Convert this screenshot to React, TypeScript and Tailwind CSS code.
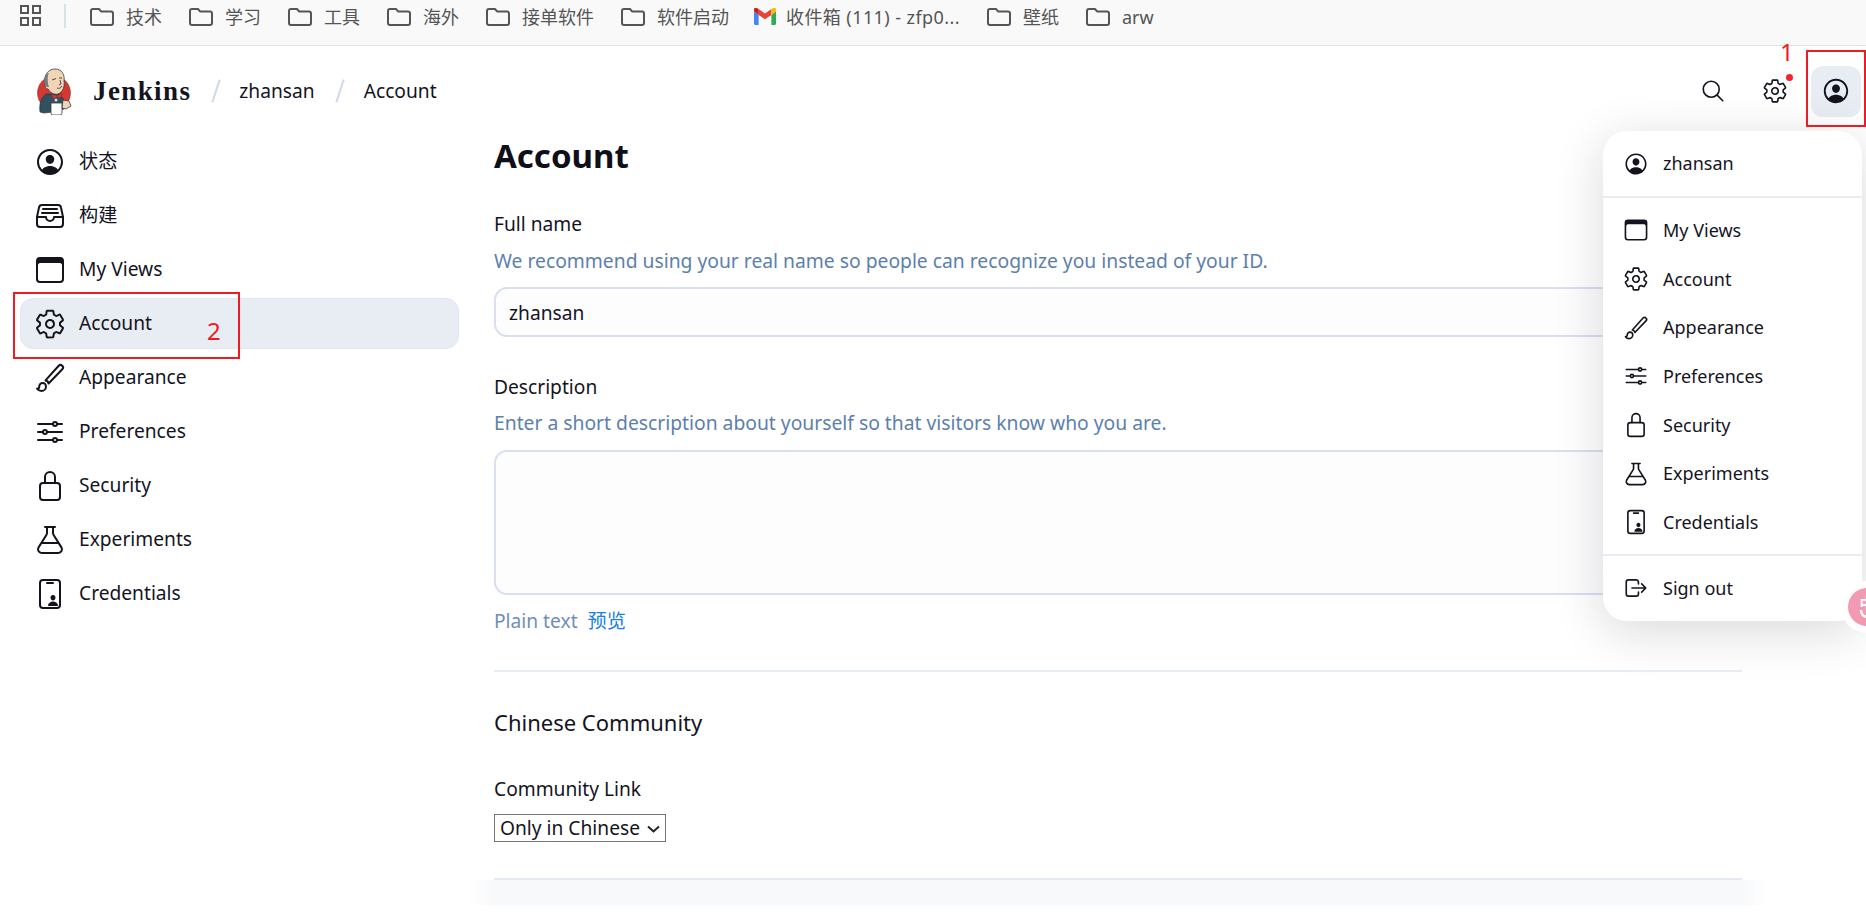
import React from "react";
import {
  IoPersonCircleOutline, IoFileTrayFullOutline, IoBrowsersOutline, IoSettingsOutline,
  IoBrushOutline, IoOptionsOutline, IoLockClosedOutline, IoFlaskOutline, IoIdCardOutline,
  IoSearchOutline, IoLogOutOutline,
} from "react-icons/io5";

const FONT = "font-['Noto_Sans','Noto_Sans_CJK_SC',sans-serif]";

function Folder() {
  return (
    <svg width="24" height="18" viewBox="0 0 24 18" fill="none" stroke="#555" strokeWidth="2" className="shrink-0">
      <path d="M1 3a2 2 0 0 1 2-2h6l2.300 2.600H21a2 2 0 0 1 2 2V15a2 2 0 0 1-2 2H3a2 2 0 0 1-2-2z" strokeLinejoin="round" />
    </svg>
  );
}

function Gmail() {
  return (
    <svg width="22" height="17" viewBox="0 0 19 16" preserveAspectRatio="none" className="shrink-0 -ml-[2px] -mr-[2px]">
      <path d="M0 3v11.500A1.500 1.500 0 0 0 1.500 16H4V6.500z" fill="#4285f4" />
      <path d="M15 6.500V16h2.500a1.500 1.500 0 0 0 1.500-1.500V3z" fill="#34a853" />
      <path d="M4 6.500 9.500 10.500 15 6.500V1L9.500 5.200 4 1z" fill="#ea4335" />
      <path d="M0 3 4 6.500V1L2.500 0A1.600 1.600 0 0 0 0 1.500z" fill="#c5221f" />
      <path d="M15 1v5.500L19 3V1.500A1.600 1.600 0 0 0 16.500 0z" fill="#fbbc04" />
    </svg>
  );
}

function Bookmark({ label, gmail }: { label: string; gmail?: boolean }) {
  return (
    <div className="flex items-center gap-[12px]">
      {gmail ? <Gmail /> : <Folder />}
      <span className={`text-[18px] leading-[24px] text-[#555] whitespace-nowrap ${gmail ? "tracking-[0.42px]" : ""}`}>{label}</span>
    </div>
  );
}

function JenkinsLogo() {
  return (
    <svg width="35" height="47" viewBox="0 0 35 47" className="shrink-0">
      <ellipse cx="17" cy="25" rx="16.500" ry="17" fill="#d33833" stroke="#7a2523" strokeWidth=".5" />
      <path d="M9 26c-5 4-7 10-6 18l4 1 8-1 12-3c2-5 0-11-5-15z" fill="#335061" stroke="#22323c" strokeWidth=".7" />
      <path d="M8 17C6 6 12 1 18 1c7 0 10 6 9 12 1 5-1 11-6 13-5 1-8-2-10-5-2 0-3-2-3-4z" fill="#f0d6b7" stroke="#3a3a3a" strokeWidth=".8" />
      <path d="M8 17c-2-6 0-11 4-12-2 3-1 8-1 11l1 3c-2 0-3 0-4-2z" fill="#7a787a" />
      <path d="M15 12l4-1.500M22 10l3 0M20 20c2 1 4 0 5-2M23 12l1 4-2 1" stroke="#3a3a3a" strokeWidth=".9" fill="none" />
      <path d="M15 26l5 2 5-3-1 5-4-1-4 2z" fill="#d33833" stroke="#7a2523" strokeWidth=".4" />
      <path d="M14 35h11v10a2 2 0 0 1-2 2h-7a2 2 0 0 1-2-2z" fill="#fff" stroke="#3a3a3a" strokeWidth=".8" />
      <path d="M26 32l6 1 2 5-5 3-4-1z" fill="#f0d6b7" stroke="#3a3a3a" strokeWidth=".8" />
      <circle cx="19" cy="32" r="1.500" fill="#dcdcdc" />
    </svg>
  );
}

const sideItems: [React.ComponentType<{ className?: string }>, string][] = [
  [IoPersonCircleOutline, "状态"],
  [IoFileTrayFullOutline, "构建"],
  [IoBrowsersOutline, "My Views"],
  [IoSettingsOutline, "Account"],
  [IoBrushOutline, "Appearance"],
  [IoOptionsOutline, "Preferences"],
  [IoLockClosedOutline, "Security"],
  [IoFlaskOutline, "Experiments"],
  [IoIdCardOutline, "Credentials"],
];

const menuItems = sideItems.slice(2);

function Sidebar() {
  return (
    <nav className="w-[439px] ml-[20px] flex flex-col shrink-0">
      {sideItems.map(([Icon, label]) => (
        <div
          key={label}
          className={`h-[51px] mb-[3px] flex items-center rounded-[13px] text-[19.2px] text-[#14141f] ${label === "Account" ? "bg-[#e8ecf3] border border-[#e1e6ef] pl-[13px]" : "pl-[14px]"}`}
        >
          <Icon className="w-[32px] h-[32px] shrink-0" />
          <span className="ml-[13px]">{label}</span>
        </div>
      ))}
    </nav>
  );
}

function Menu() {
  return (
    <div className="absolute left-[1603px] top-[131px] w-[259px] h-[490px] bg-white rounded-[24px] shadow-[0_10px_50px_rgba(20,20,31,0.16)] flex flex-col text-[18px] text-[#14141f]">
      <div className="h-[67px] flex items-center pl-[20px] border-b-2 border-[#e8ecf3] shrink-0">
        <IoPersonCircleOutline className="w-[26px] h-[26px]" />
        <span className="ml-[14px]">zhansan</span>
      </div>
      <div className="flex flex-col pt-[8px] pb-[7px] border-b-2 border-[#e8ecf3]">
        {menuItems.map(([Icon, label]) => (
          <div key={label} className="h-[48.700px] flex items-center pl-[20px]">
            <Icon className="w-[26px] h-[26px]" />
            <span className="ml-[14px]">{label}</span>
          </div>
        ))}
      </div>
      <div className="flex-1 flex items-center pl-[20px]">
        <IoLogOutOutline className="w-[26px] h-[26px]" />
        <span className="ml-[14px]">Sign out</span>
      </div>
    </div>
  );
}

export default function App() {
  return (
    <div className={`relative w-[1866px] h-[912px] overflow-hidden bg-white text-[#14141f] ${FONT}`}>
      {/* bookmarks bar */}
      <div className="h-[46px] bg-[#f9f9f9] border-b border-[#e3e3e3] flex items-center pl-[20px] pb-[12px]">
        <svg width="21" height="21" viewBox="0 0 21 21" fill="none" stroke="#555" strokeWidth="2" className="shrink-0 -mt-[2px]">
          <rect x="1" y="1" width="7" height="7" />
          <rect x="13" y="1" width="7" height="7" />
          <rect x="1" y="13" width="7" height="7" />
          <rect x="13" y="13" width="7" height="7" />
        </svg>
        <div className="w-[2px] h-[24px] bg-[#d3e3e8] ml-[23px] mr-[24px] -mt-[2px]" />
        <div className="flex items-center gap-[27px]">
          {["技术", "学习", "工具", "海外", "接单软件", "软件启动"].map((l) => <Bookmark key={l} label={l} />)}
          <Bookmark gmail label="收件箱 (111) - zfp0..." />
          {["壁纸", "arw"].map((l) => <Bookmark key={l} label={l} />)}
        </div>
      </div>

      {/* header */}
      <header className="h-[88px] flex items-center pl-[37px] pt-[2px]">
        <JenkinsLogo />
        <span className="ml-[21px] font-['Liberation_Serif',serif] font-bold text-[27px] tracking-[1.4px]">Jenkins</span>
        <span className="ml-[24px] w-[2px] h-[24px] bg-[#cfd9e8] rotate-[18deg]" />
        <span className="ml-[22px] text-[19.2px]">zhansan</span>
        <span className="ml-[24px] w-[2px] h-[24px] bg-[#cfd9e8] rotate-[18deg]" />
        <span className="ml-[23px] text-[19.2px]">Account</span>
        <div className="ml-auto mr-[5px] flex items-center">
          <IoSearchOutline className="w-[26px] h-[26px]" />
          <div className="relative ml-[36px]">
            <IoSettingsOutline className="w-[26px] h-[26px]" />
            <span className="absolute -right-[5px] -top-[4px] w-[7px] h-[7px] rounded-full bg-[#f5222d]" />
          </div>
          <div className="ml-[23px] w-[50px] h-[51px] rounded-[12px] bg-[#e8ecf3] flex items-center justify-center">
            <IoPersonCircleOutline className="w-[30px] h-[30px]" />
          </div>
        </div>
      </header>

      {/* body */}
      <div className="flex mt-[2px]">
        <Sidebar />
        <main className="ml-[35px] w-[1248px] flex flex-col shrink-0">
          <h1 className="text-[33px] font-bold leading-[40px] text-[#0f0f1a]">Account</h1>
          <label className="mt-[35px] text-[19.2px] leading-[26px]">Full name</label>
          <p className="mt-[11px] text-[19.3px] leading-[26px] text-[#5c80ae]">We recommend using your real name so people can recognize you instead of your ID.</p>
          <input readOnly value="zhansan" className="mt-[13px] h-[50px] w-full rounded-[13px] border-2 border-[#d9dff0] bg-[#fdfdfe] px-[13px] text-[19.2px] outline-none" />
          <label className="mt-[37px] text-[19.2px] leading-[26px]">Description</label>
          <p className="mt-[10px] text-[19.3px] leading-[26px] text-[#5c80ae]">Enter a short description about yourself so that visitors know who you are.</p>
          <textarea readOnly className="mt-[14px] h-[145px] w-full rounded-[13px] border-2 border-[#d9dff0] bg-[#fdfdfe] resize-none outline-none" />
          <div className="mt-[13px] text-[19.2px] leading-[26px] flex">
            <span className="text-[#6f8fb8]">Plain text</span>
            <span className="ml-[10px] text-[#1a7fe8]">预览</span>
          </div>
          <div className="mt-[36px] h-[2px] bg-[#e8ecf3]" />
          <h2 className="mt-[35px] text-[22px] leading-[30px] font-normal">Chinese Community</h2>
          <label className="mt-[39px] text-[19.2px] leading-[26px]">Community Link</label>
          <div className="relative mt-[12px] self-start">
            <select className="block w-[172px] h-[28px] border border-[#767676] bg-white text-[19.2px] leading-[26px] pl-[5px] appearance-none" defaultValue="zh">
              <option value="zh">Only in Chinese</option>
            </select>
            <svg width="13" height="8" viewBox="0 0 13 8" fill="none" stroke="#222" strokeWidth="2" className="absolute left-[153px] top-[11px] pointer-events-none">
              <path d="M1 1.500 6.500 6.500 12 1.500" />
            </svg>
          </div>
          <div className="mt-[36px] h-[2px] bg-[#e4e8f2]" />
          <div className="-mx-[27px] h-[25px] bg-[linear-gradient(to_right,#ffffff,#f8f9fb_27px,#f8f9fb_1275px,#ffffff)]" />
        </main>
      </div>

      <Menu />

      {/* input-method widget */}
      <div className="absolute left-[1841px] top-[581px] w-[52px] h-[52px] rounded-full bg-white flex items-center justify-center">
        <div className="w-[38px] h-[38px] rounded-full bg-[#f29ab2] flex flex-col items-center justify-center text-white text-[15px] font-bold leading-none">
          <span className="leading-[14px]">中</span>
          <svg width="16" height="8" viewBox="0 0 16 8" fill="none" stroke="#fff" strokeWidth="2.500"><path d="M2 0c0 9 12 9 12 0" /></svg>
        </div>
      </div>

      {/* annotations */}
      <div className="absolute left-[1806px] top-[50px] w-[60px] h-[77px] border-2 border-[#ed1c24]" />
      <div className="absolute left-[1780px] top-[38px] text-[24px] leading-[28px] text-[#ed1c24]">1</div>
      <div className="absolute left-[13px] top-[292px] w-[227px] h-[67px] border-2 border-[#ed1c24]" />
      <div className="absolute left-[207px] top-[317px] text-[24px] leading-[28px] text-[#ed1c24]">2</div>
    </div>
  );
}
